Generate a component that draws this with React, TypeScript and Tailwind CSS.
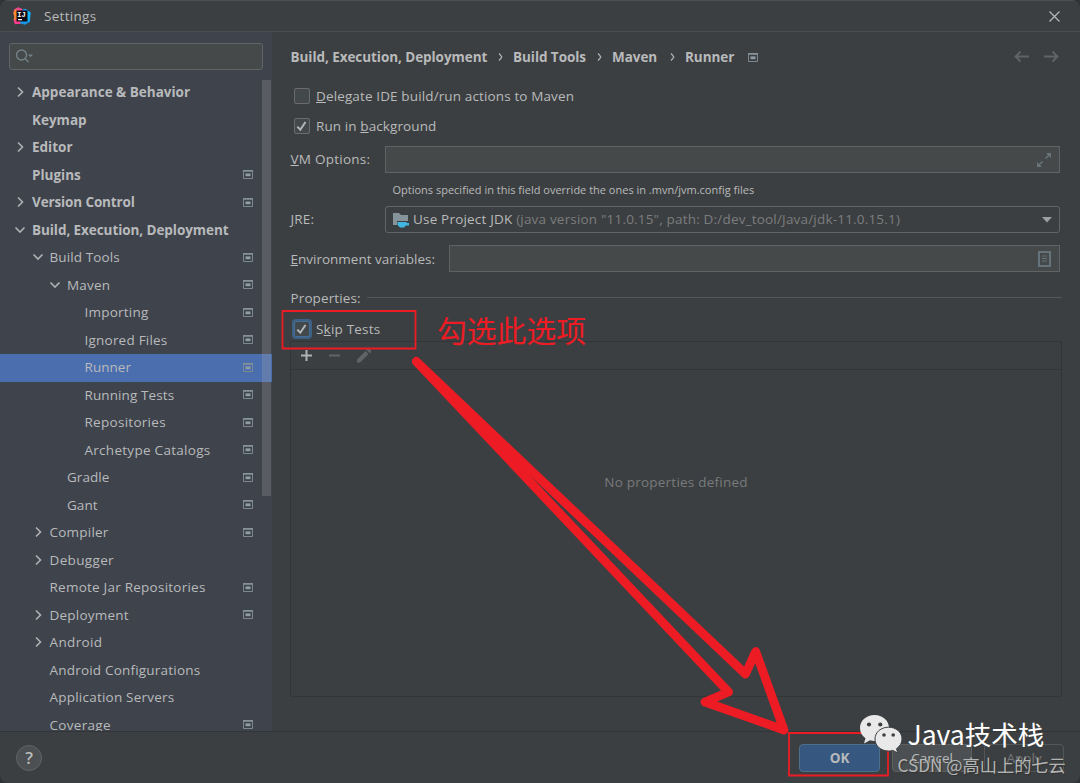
import React from 'react';

interface TreeItem {
  label: string;
  indent: string;
  tracking?: string;
  arrow?: 'right' | 'down';
  bold?: boolean;
  project?: boolean;
  selected?: boolean;
}

const L0 = 'pl-[13px]';
const L1 = 'pl-[30.5px]';
const L2 = 'pl-[48px]';
const L3 = 'pl-[65.5px]';

const wide = 'tracking-[0.22px]';
const normal = 'tracking-[0.05px]';

const treeItems: TreeItem[] = [
  { label: 'Appearance & Behavior', indent: L0, arrow: 'right', bold: true },
  { label: 'Keymap', indent: L0, bold: true },
  { label: 'Editor', indent: L0, arrow: 'right', bold: true },
  { label: 'Plugins', indent: L0, bold: true, project: true },
  { label: 'Version Control', indent: L0, arrow: 'right', bold: true, project: true, tracking: 'tracking-[-0.13px]' },
  { label: 'Build, Execution, Deployment', indent: L0, arrow: 'down', bold: true, tracking: 'tracking-[-0.07px]' },
  { label: 'Build Tools', indent: L1, arrow: 'down', project: true, tracking: 'tracking-[0.1px]' },
  { label: 'Maven', indent: L2, arrow: 'down', project: true, tracking: wide },
  { label: 'Importing', indent: L3, project: true, tracking: wide },
  { label: 'Ignored Files', indent: L3, project: true, tracking: wide },
  { label: 'Runner', indent: L3, project: true, selected: true, tracking: normal },
  { label: 'Running Tests', indent: L3, project: true, tracking: 'tracking-[0.1px]' },
  { label: 'Repositories', indent: L3, project: true, tracking: 'tracking-[0.28px]' },
  { label: 'Archetype Catalogs', indent: L3, project: true, tracking: 'tracking-[0.28px]' },
  { label: 'Gradle', indent: L2, project: true, tracking: normal },
  { label: 'Gant', indent: L2, project: true, tracking: normal },
  { label: 'Compiler', indent: L1, arrow: 'right', project: true, tracking: wide },
  { label: 'Debugger', indent: L1, arrow: 'right', tracking: 'tracking-[0.35px]' },
  { label: 'Remote Jar Repositories', indent: L1, project: true, tracking: 'tracking-[0.24px]' },
  { label: 'Deployment', indent: L1, arrow: 'right', project: true, tracking: wide },
  { label: 'Android', indent: L1, arrow: 'right', tracking: 'tracking-[0.35px]' },
  { label: 'Android Configurations', indent: L1, tracking: 'tracking-[0.2px]' },
  { label: 'Application Servers', indent: L1, tracking: wide },
  { label: 'Coverage', indent: L1, project: true, tracking: 'tracking-[0.3px]' },
];

const ProjectIcon = () => (
  <svg width="10" height="9" viewBox="0 0 10 9" className="shrink-0">
    <path d="M0.5 1h9v7.5h-9z" fill="none" stroke="#7c8890" />
    <path d="M0 0h10v1.6H0z" fill="#87939a" />
    <path d="M2.5 3.4h5v2.8h-5z" fill="#919da4" />
  </svg>
);

const TreeArrow: React.FC<{ direction?: 'right' | 'down' }> = ({ direction }) => (
  <svg width="14" height="14" viewBox="0 0 14 14" className="shrink-0" fill="none" stroke="#afb1b3" strokeWidth="1.6">
    {direction === 'right' && <path d="M5 2.5l4.5 4.5L5 11.5" />}
    {direction === 'down' && <path d="M2.5 4.5L7 9l4.5-4.5" />}
  </svg>
);

const AppLogo = () => (
  <svg width="18" height="18" viewBox="0 0 18 18">
    <path d="M1 2.5L5 .3l3.5 1.2 2 2V16l-8.500 1.3L.5 13l1-3L.3 7z" fill="#f0488c" />
    <path d="M.5 5L3 2l2 3-1 7-3.500 1 1-3z" fill="#fb8b24" />
    <path d="M1.5 13.5h5l1 3.5H2z" fill="#fc3c8c" />
    <path d="M9.5 2.5l3-.8 5 3.5-.5 9.5-5 3-5-1.5z" fill="#1597ee" />
    <path d="M14 3.5l3.5 2-.8 8-2.500 1.5z" fill="#13b3f5" />
    <path d="M3.5 3.5h11v11h-11z" fill="#100b12" />
    <text x="4.2" y="9.6" fontSize="7" fontWeight="700" fill="#fff" fontFamily="Liberation Mono, monospace">IJ</text>
    <path d="M5 12h4v1.2H5z" fill="#fff" />
  </svg>
);

interface CheckboxProps {
  checked?: boolean;
  focused?: boolean;
}

const Checkbox: React.FC<CheckboxProps> = ({ checked, focused }) => (
  <span
    className={
      focused
        ? 'flex size-[16px] shrink-0 items-center justify-center rounded-[2px] border border-[#466d94] bg-[#43494a] ring-2 ring-[#3d6185]'
        : 'flex size-[16px] shrink-0 items-center justify-center rounded-[2px] border border-[#6b6b6b] bg-[#43494a]'
    }
  >
    {checked && (
      <svg width="13" height="13" viewBox="0 0 13 13" fill="none" stroke="#b4b6b7" strokeWidth="2">
        <path d="M2.3 6.6L5.3 9.7 10.5 2" />
      </svg>
    )}
  </span>
);

const Sidebar = () => (
  <aside className="relative w-[272px] shrink-0 overflow-hidden bg-[#3f434c]">
    <div className="px-[9px] pt-[11px]">
      <div className="flex h-[27px] w-[254px] items-center rounded-[3px] border border-[#616365] bg-[#454949] pb-px pl-[5px]">
        <svg width="20" height="16" viewBox="0 0 20 16" fill="none" stroke="#748189" strokeWidth="1.4">
          <circle cx="6.5" cy="7" r="5" />
          <path d="M10 10.6l3.5 3.4" />
          <path d="M13 6.5h5l-2.5 2.8z" fill="#748189" stroke="none" />
        </svg>
      </div>
    </div>
    <ul className="pt-[9px]">
      {treeItems.map((item) => (
        <li
          key={item.label}
          className={`flex h-[27.5px] items-center pr-[19px] pb-[1.2px] ${item.indent} ${item.selected ? 'bg-[#4b6eaf]' : ''}`}
        >
          <TreeArrow direction={item.arrow} />
          <span className={`ml-[5px] flex-1 whitespace-nowrap ${item.tracking ?? ''} ${item.bold ? 'font-bold' : ''}`}>
            {item.label}
          </span>
          {item.project && <ProjectIcon />}
        </li>
      ))}
    </ul>
    <div className="absolute top-[48px] left-[261.5px] h-[416px] w-[9px] bg-[#a6a6a6]/25" />
  </aside>
);

const Chevron = () => (
  <svg width="18" height="10" viewBox="0 0 18 10" className="shrink-0" fill="none" stroke="#afb1b3" strokeWidth="1.3">
    <path d="M4 1.5Q6 3.5 6.8 5 6 6.5 4 8.5" />
  </svg>
);

const Breadcrumb = () => (
  <div className="flex h-[20px] items-center font-bold tracking-[-0.06px]">
    <span className="w-[205px] pl-[0.5px]">Build, Execution, Deployment</span>
    <Chevron />
    <span className="w-[81px]">Build Tools</span>
    <Chevron />
    <span className="w-[55px]">Maven</span>
    <Chevron />
    <span className="mr-[14px]">Runner</span>
    <ProjectIcon />
    <div className="ml-auto flex gap-[15px] pr-[3.5px]">
      <svg width="15" height="12" viewBox="0 0 15 12" fill="none" stroke="#616466" strokeWidth="1.9">
        <path d="M15 5.5H1.5M6.5 .5L1.5 5.5l5 5" />
      </svg>
      <svg width="15" height="12" viewBox="0 0 15 12" fill="none" stroke="#616466" strokeWidth="1.9">
        <path d="M0 5.5h13.5M8.5 .5l5 5-5 5" />
      </svg>
    </div>
  </div>
);

const RunnerPanel = () => (
  <main className="flex flex-1 flex-col px-[18px] pt-[15px]">
    <Breadcrumb />
    <label className="mt-[19px] ml-[3.5px] flex h-[20px] items-center gap-[6.5px]">
      <Checkbox />
      <span className="tracking-[0.13px]"><u>D</u>elegate IDE build/run actions to Maven</span>
    </label>
    <label className="mt-[10px] ml-[3.5px] flex h-[20px] items-center gap-[6.5px]">
      <Checkbox checked />
      <span className="tracking-[0.1px]">Run in <u>b</u>ackground</span>
    </label>
    <div className="mt-[10px] flex h-[27px] items-center pr-[2px]">
      <span className="w-[95px] pb-[2px] pl-[0.5px] tracking-[0.25px]"><u>V</u>M Options:</span>
      <div className="flex h-[27px] flex-1 items-center justify-end border border-[#606364] bg-[#454949] pr-[8px]">
        <svg width="14" height="14" viewBox="0 0 14 14" fill="#697579" stroke="#697579" strokeWidth="1.5">
          <path d="M8.5 5.5L12 2M1.5 12.5L5.5 8.5" />
          <path d="M9 0h5v5zM0 9v5h5z" stroke="none" />
        </svg>
      </div>
    </div>
    <p className="mt-[7px] h-[20px] pl-[102.5px] text-[11px] leading-[20px]">
      Options specified in this field override the ones in .mvn/jvm.config files
    </p>
    <div className="mt-[6px] flex h-[27px] items-center pr-[2px]">
      <span className="w-[95px] pb-[2px] pl-[0.5px] tracking-[0.2px]"><u>J</u>RE:</span>
      <div className="flex h-[27px] flex-1 items-center rounded-[3px] border border-[#646464] pr-[7px] pl-[6px]">
        <svg width="18" height="16" viewBox="0 0 18 16">
          <path d="M1 1h6l2 2h7v6H5v4H1z" fill="#87939a" />
          <path d="M5.5 10h9v1h2.5v2.5h-3L12 15.5H8L5.5 13z" fill="#40b6e0" />
        </svg>
        <span className="ml-[3px] flex-1 pb-px whitespace-nowrap tracking-[0.19px]">
          Use Project JDK <span className="text-[#7b7d7e]">(java version "11.0.15", path: D:/dev_tool/Java/jdk-11.0.15.1)</span>
        </span>
        <svg width="10" height="6" viewBox="0 0 10 6"><path d="M0 0h10L5 5.5z" fill="#9da0a2" /></svg>
      </div>
    </div>
    <div className="mt-[12px] flex h-[27px] items-center pr-[2px]">
      <span className="w-[159px] pl-[0.5px]"><u>E</u>nvironment variables:</span>
      <div className="flex h-[27px] flex-1 items-center justify-end border border-[#606364] bg-[#454949] pr-[8px]">
        <svg width="13" height="16" viewBox="0 0 13 16" fill="none" stroke="#65747a">
          <path d="M1 1h11v14H1z" strokeWidth="2" />
          <path d="M4 5h5M4 7.5h5M4 10h5" />
        </svg>
      </div>
    </div>
    <div className="mt-[15.5px] flex h-[20px] items-center gap-[6px]">
      <span className="pl-[0.5px] tracking-[0.12px]">Properties:</span>
      <div className="h-px flex-1 bg-[#56595b]" />
    </div>
    <label className="mt-[11.5px] ml-[3.5px] flex h-[20px] items-center gap-[6.5px]">
      <Checkbox checked focused />
      <span className="tracking-[0.2px]">S<u>k</u>ip Tests</span>
    </label>
    <div className="mt-[2px] flex h-[356px] flex-col border border-[#333638]">
      <div className="flex h-[28px] items-center gap-[15px] border-b border-[#333638] pl-[9px]">
        <svg width="13" height="13" viewBox="0 0 13 13" stroke="#afb1b3" strokeWidth="2"><path d="M6.5 1v11M1 6.500h11" /></svg>
        <svg width="14" height="13" viewBox="0 0 14 13" stroke="#606365" strokeWidth="2"><path d="M1 6.5h11" /></svg>
        <svg width="16" height="14" viewBox="0 0 16 14" fill="#606365">
          <path d="M0 13.5v-3L8.5 2l3 3L3 13.5zM9.5 1l1-1h2L14 1.500v2L12.5 4z" />
        </svg>
      </div>
      <div className="flex h-[224px] items-center justify-center tracking-[0.23px] text-[#787a7c]">No properties defined</div>
    </div>
  </main>
);

const Footer = () => (
  <footer className="flex h-[52px] shrink-0 items-center border-t border-[#323537] px-[16px]">
    <div className="flex size-[26px] items-center justify-center rounded-full border border-[#616465] bg-[#4c5052] text-[17px] font-semibold">?</div>
    <div className="ml-auto flex gap-[12px]">
      <button className="flex h-[28px] w-[81px] items-center justify-center rounded-[4px] border border-[#4c708c] bg-[#365880] pt-px font-bold">OK</button>
      <button className="flex h-[28px] w-[80px] items-center justify-center rounded-[4px] border border-[#5e6060] bg-[#4c5052]">Cancel</button>
      <button className="flex h-[28px] w-[80px] items-center justify-center rounded-[4px] border border-[#545758] text-[#74777a]">Apply</button>
    </div>
  </footer>
);

const Annotations = () => (
  <div className="pointer-events-none absolute inset-0">
    <svg className="absolute inset-0" width="1080" height="783" viewBox="0 0 1080 783" fill="none" stroke="#ed1c24">
      <path d="M282.5 311h133v37.5h-133zM789 733h99v42.5h-99z" strokeWidth="1.8" />
      <path
        d="M416.3 361.5L745.5 674 755.7 651.5 784 730 705 702 728.5 692z"
        strokeWidth="8.8"
        strokeLinejoin="round"
      />
    </svg>
    <div className="absolute top-[307px] left-[437px] font-['Noto_Sans_CJK_SC',sans-serif] text-[29.8px] leading-[44px] whitespace-nowrap text-[#ed1c24]">
      勾选此选项
    </div>
    <svg className="absolute top-[714px] left-[859px]" width="44" height="40" viewBox="0 0 44 40">
      <path d="M15.5 1C7.5 1 1 6.5 1 14c0 4.5 2.2 8 5.5 10.3L5 29.5l6-3.2c1.5.4 3 .7 4.5.7C23.5 27 30 21.5 30 14S23.5 1 15.5 1z" fill="#e9e9e9" />
      <path
        d="M29.5 13.2C22.3 13.2 16 18 16 25s6 12 13.5 12c1.5 0 3-.2 4.3-.6l5 2.6-1.3-4.3C40.8 32.5 43 29 43 25c0-7-6-11.8-13.5-11.8z"
        fill="#e9e9e9"
        stroke="#3c3f41"
        strokeWidth="1"
      />
      <g fill="#3c3f41">
        <circle cx="10" cy="10.5" r="2.1" />
        <circle cx="21.3" cy="10.5" r="2.1" />
        <circle cx="25" cy="21" r="1.8" />
        <circle cx="34.2" cy="21" r="1.8" />
      </g>
    </svg>
    <div className="absolute top-[714px] left-[907.5px] font-['Noto_Sans_CJK_SC',sans-serif] text-[26.5px] leading-[40px] whitespace-nowrap text-white">
      Java技术栈
    </div>
    <div className="absolute top-[752px] left-[897.5px] font-['Noto_Sans_CJK_SC',sans-serif] text-[17.2px] leading-[26px] whitespace-nowrap text-[#c4c5c5]/90 [text-shadow:1px_1px_1px_#333]">
      CSDN @高山上的七云
    </div>
  </div>
);

const App: React.FC = () => {
  return (
    <div className="h-[783px] w-[1080px] bg-[#303335]">
      <div className="relative flex h-[783px] w-[1080px] flex-col overflow-hidden rounded-[8px] bg-[#3c3f41] font-['Open_Sans','Noto_Sans',sans-serif] text-[13.5px] leading-[20px] text-[#b8babb]">
        <header className="flex h-[32px] shrink-0 items-center border-t border-b border-t-[#4d5052] border-b-[#4b4e50] pl-[13px]">
          <AppLogo />
          <span className="ml-[13px] tracking-[0.3px]">Settings</span>
          <svg className="mr-[20px] ml-auto" width="11" height="11" viewBox="0 0 11 11" stroke="#b4b6b7" strokeWidth="1.3">
            <path d="M.5.5l10 10M10.5.5l-10 10" />
          </svg>
        </header>
        <div className="flex h-[699px] shrink-0">
          <Sidebar />
          <RunnerPanel />
        </div>
        <Footer />
        <Annotations />
      </div>
    </div>
  );
};

export default App;
